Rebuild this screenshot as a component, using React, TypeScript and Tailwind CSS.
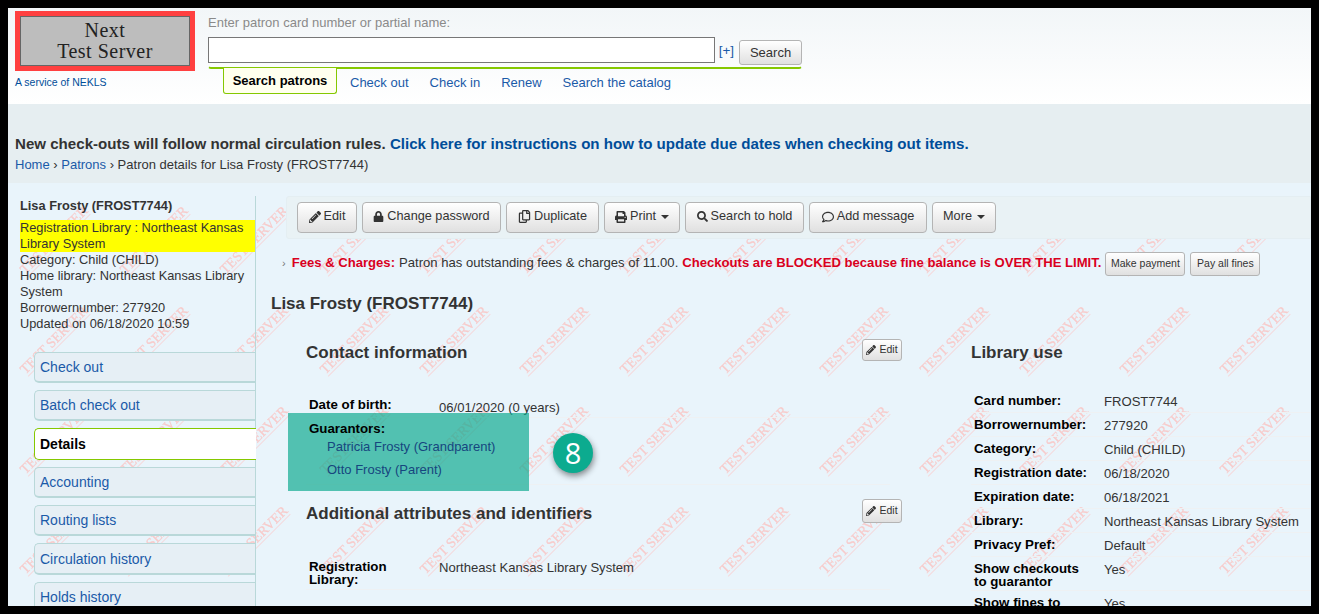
import React from "react";
import { FaPencilAlt, FaLock, FaRegCopy, FaPrint, FaSearch, FaRegComment } from "react-icons/fa";

const btn =
  "flex items-center justify-center gap-[3px] h-[31px] pb-[2px] border border-[#b4b4b4] rounded-[4px] bg-gradient-to-b from-white to-[#e0e0e0] text-[#333] text-[12.7px] whitespace-nowrap";
const smallBtn =
  "flex items-center justify-center gap-[3px] border border-[#b4b4b4] rounded-[3px] bg-gradient-to-b from-white to-[#e0e0e0] text-[#333] text-[10.5px] whitespace-nowrap";

function Caret() {
  return <span className="ml-[2px] inline-block w-0 h-0 border-x-[4px] border-x-transparent border-t-[4px] border-t-[#333]" />;
}

function Watermark() {
  return (
    <svg className="absolute inset-0 w-full h-full pointer-events-none" aria-hidden="true">
      <defs>
        <pattern id="wm" width="100" height="100" patternUnits="userSpaceOnUse">
          <g transform="translate(47 58) rotate(-45)">
            <text x="0" y="3" textAnchor="middle" fontFamily="'Liberation Serif', serif" fontSize="14" fill="#f7cbcb" stroke="#f7cbcb" strokeWidth="0.25">
              TEST SERVER
            </text>
            <line x1="-44" y1="6" x2="44" y2="6" stroke="#f4dadd" strokeWidth="1" />
          </g>
        </pattern>
      </defs>
      <rect width="100%" height="100%" fill="url(#wm)" />
    </svg>
  );
}

const tabs: [string, number][] = [
  ["Check out", 31],
  ["Batch check out", 31],
  ["Details", 32],
  ["Accounting", 31],
  ["Routing lists", 31],
  ["Circulation history", 32],
  ["Holds history", 31],
];

function Sidebar() {
  return (
    <div className="relative w-[248px] shrink-0 border-r border-[#b9d8d9] mt-[13px] pl-[12px] text-[12.8px] leading-[16px] text-[#333]">
      <div className="h-[24px] pt-[2px] font-bold text-[12.8px] leading-[16px]">Lisa Frosty (FROST7744)</div>
      <div className="bg-[#ffff00]">Registration Library : Northeast Kansas Library System</div>
      <div>Category: Child (CHILD)</div>
      <div>Home library: Northeast Kansas Library System</div>
      <div>Borrowernumber: 277920</div>
      <div>Updated on 06/18/2020 10:59</div>
      <div className="mt-[20px] ml-[14px] flex flex-col gap-[7px]">
        {tabs.map(([t, h]) =>
          t === "Details" ? (
            <div key={t} style={{ height: h }} className="shrink-0 flex items-center pl-[5px] -mr-px rounded-l-[5px] border border-r-0 border-[#85c800] bg-white font-bold text-black text-[14px]">
              {t}
            </div>
          ) : (
            <div key={t} style={{ height: h }} className="shrink-0 flex items-center pl-[5px] rounded-l-[5px] border border-r-0 border-b-2 border-[#b9d8d9] bg-[#e6eff5] text-[#1a5aa8] text-[14px]">
              {t}
            </div>
          )
        )}
      </div>
    </div>
  );
}

function Toolbar() {
  return (
    <div className="ml-[30px] mt-[13px] h-[43px] flex items-center gap-[5px] pl-[10px] bg-[#e9f2f5] border border-[#e4eef2] rounded-l-[3px]">
      <div className={btn + " w-[60px]"}><FaPencilAlt className="text-[12px]" />Edit</div>
      <div className={btn + " w-[139px]"}><FaLock className="text-[11px]" />Change password</div>
      <div className={btn + " w-[93px]"}><FaRegCopy className="text-[13px]" />Duplicate</div>
      <div className={btn + " w-[76px]"}><FaPrint className="text-[12px]" />Print<Caret /></div>
      <div className={btn + " w-[119px]"}><FaSearch className="text-[11px]" />Search to hold</div>
      <div className={btn + " w-[118px]"}><FaRegComment className="text-[12px]" />Add message</div>
      <div className={btn + " w-[64px]"}>More<Caret /></div>
    </div>
  );
}

function EditBtn({ h }: { h: number }) {
  return (
    <div style={{ height: h }} className={smallBtn + " w-[40px]"}>
      <FaPencilAlt className="text-[10px]" />Edit
    </div>
  );
}

function Row({ label, children, h, labelCls }: { label: React.ReactNode; children: React.ReactNode; h: number; labelCls?: string }) {
  return (
    <div style={{ height: h }} className="flex border-b border-[#eef1f3] pl-[3px]">
      <div className={"w-[130px] shrink-0 font-bold text-[13.3px] leading-[13px] text-black " + (labelCls ?? "pt-[5px]")}>{label}</div>
      <div className="pt-[5px] text-[13.1px] leading-[16px] text-[#333] whitespace-nowrap">{children}</div>
    </div>
  );
}

function ContactColumn() {
  return (
    <div className="w-[596px] shrink-0 ml-[35px]">
      <div className="h-[22px] flex justify-between items-start">
        <div className="pt-[4px] text-[17px] leading-[20px] font-bold text-[#333]">Contact information</div>
        <EditBtn h={22} />
      </div>
      <div className="w-[584px] mt-[29px]">
        <Row label="Date of birth:" h={28} labelCls="pt-[8px]">
          <span className="relative top-[5px]">06/01/2020 (0 years)</span>
        </Row>
        <div className="relative h-[67px] border-b border-[#eef1f3] pl-[3px] pt-[4px]">
          <div className="absolute left-[-18px] top-[-5px] w-[241px] h-[78px] bg-[#0aa88d]/[0.68]" />
          <div className="relative font-bold text-[13.3px] leading-[13px] text-black">Guarantors:</div>
          <div className="relative ml-[18px] text-[13px] leading-[23px] text-[#16467f]">
            <div>Patricia Frosty (Grandparent)</div>
            <div>Otto Frosty (Parent)</div>
          </div>
          <div className="absolute left-[247px] top-[15px] w-[40px] h-[40px] rounded-full bg-[#0cab8f] text-white text-[29px] leading-[40px] text-center font-['Open_Sans',sans-serif] shadow-[1px_3px_6px_rgba(0,0,0,0.45)]">
            8
          </div>
        </div>
      </div>
      <div className="mt-[14px] h-[24px] flex justify-between items-start">
        <div className="pt-[5px] text-[17px] leading-[20px] font-bold text-[#333]">Additional attributes and identifiers</div>
        <EditBtn h={24} />
      </div>
      <div className="w-[584px] mt-[29px]">
        <Row label={<>Registration<br />Library:</>} h={38} labelCls="pt-[8px]">
          <span className="relative top-[3px]">Northeast Kansas Library System</span>
        </Row>
      </div>
    </div>
  );
}

function LibraryColumn() {
  const rows: [string, string][] = [
    ["Card number:", "FROST7744"],
    ["Borrowernumber:", "277920"],
    ["Category:", "Child (CHILD)"],
    ["Registration date:", "06/18/2020"],
    ["Expiration date:", "06/18/2021"],
    ["Library:", "Northeast Kansas Library System"],
    ["Privacy Pref:", "Default"],
  ];
  return (
    <div className="ml-[69px] flex-1 min-w-0">
      <div className="h-[22px] pt-[4px] text-[17px] leading-[20px] font-bold text-[#333]">Library use</div>
      <div className="mt-[28px]">
        {rows.map(([l, v]) => (
          <Row key={l} label={l} h={24}>{v}</Row>
        ))}
        <Row label={<>Show checkouts<br />to guarantor</>} h={34}>Yes</Row>
        <Row label={<>Show fines to<br />guarantor</>} h={34}>Yes</Row>
      </div>
    </div>
  );
}

function Main() {
  return (
    <div className="relative flex-1 min-w-0">
      <Toolbar />
      <div className="mt-[13px] h-[24px] flex items-center pl-[26px] text-[13.1px] text-[#333] whitespace-nowrap">
        <span className="text-[#777] text-[11px] mr-[6px] mb-[2px]">›</span>
        <b className="text-[#d9001e] mb-[2px]">Fees &amp; Charges:</b>
        <span className="ml-[4px] mb-[2px]">Patron has outstanding fees &amp; charges of 11.00.</span>
        <b className="ml-[4px] mb-[2px] text-[#d9001e]">Checkouts are BLOCKED because fine balance is OVER THE LIMIT.</b>
        <div className={smallBtn + " ml-[4px] h-[24px] w-[80px]"}>Make payment</div>
        <div className={smallBtn + " ml-[5px] h-[24px] w-[70px]"}>Pay all fines</div>
      </div>
      <div className="mt-[16px] h-[24px] pl-[15px] text-[17px] leading-[24px] font-bold text-[#333]">Lisa Frosty (FROST7744)</div>
      <div className="mt-[23px] flex">
        <div className="w-[15px] shrink-0" />
        <ContactColumn />
        <LibraryColumn />
      </div>
    </div>
  );
}

export default function App() {
  return (
    <div className="w-[1319px] h-[614px] bg-black p-2 overflow-hidden font-['Liberation_Sans',sans-serif]">
      <div className="h-[598px] flex flex-col overflow-hidden">
        <header className="h-[96px] shrink-0 flex bg-gradient-to-b from-[#f2f6f8] to-white">
          <div className="w-[200px] shrink-0 pl-[7px] pt-[3px]">
            <div className="w-[180px] h-[60px] bg-[#ff4040] p-[5px]">
              <div className="h-full border border-[#666] bg-[#bdbdbd] flex flex-col items-center justify-center text-[#222] text-[20px] tracking-[0.5px] leading-[21px] font-['Liberation_Serif',serif]">
                <div>Next</div>
                <div>Test Server</div>
              </div>
            </div>
            <div className="mt-[5px] text-[10.5px] leading-[12px] text-[#004d99]">A service of NEKLS</div>
          </div>
          <div className="w-[594px] shrink-0 flex flex-col pt-[6px]">
            <div className="h-[23px] pt-[1px] text-[13px] leading-[16px] text-[#8a8a8a]">Enter patron card number or partial name:</div>
            <div className="h-[28px] flex">
              <div className="w-[507px] h-[26px] border border-[#777] bg-white" />
              <div className="ml-[4px] mt-[5px] text-[13.5px] leading-[18px] text-[#1a5aa8]">[+]</div>
              <div className="ml-[5px] mt-[3px] w-[63px] h-[25px] flex items-center justify-center border border-[#b4b4b4] rounded-[3px] bg-gradient-to-b from-white to-[#e0e0e0] text-[13px] text-[#333]">Search</div>
            </div>
            <div className="h-[4px] border-b-2 border-x border-x-transparent border-b-[#85c800] rounded-b-[3px]" />
            <div className="flex">
              <div className="ml-[15px] -mt-px w-[114px] h-[26px] flex items-center justify-center border border-t-0 border-[#85c800] rounded-b-[3px] bg-[#ffffee] font-bold text-[13px] text-black">Search patrons</div>
              <div className="ml-[13px] flex gap-[21px] pt-[5px] text-[13px] leading-[18px] text-[#1a5aa8] whitespace-nowrap">
                <span>Check out</span>
                <span>Check in</span>
                <span>Renew</span>
                <span>Search the catalog</span>
              </div>
            </div>
          </div>
        </header>
        <div className="h-[79px] shrink-0 bg-[#e6eef1] pl-[7px] pt-[30px]">
          <div className="h-[20px] text-[15.1px] leading-[20px] font-bold text-[#333] whitespace-nowrap">
            New check-outs will follow normal circulation rules. <span className="text-[#004d99]">Click here for instructions on how to update due dates when checking out items.</span>
          </div>
          <div className="mt-[1px] text-[13px] leading-[20px] text-[#333] whitespace-nowrap">
            <span className="text-[#1a5aa8]">Home</span> › <span className="text-[#1a5aa8]">Patrons</span> › Patron details for Lisa Frosty (FROST7744)
          </div>
        </div>
        <div className="relative flex-1 min-h-0 flex overflow-hidden bg-[#e9f4fb]">
          <Watermark />
          <Sidebar />
          <Main />
        </div>
      </div>
    </div>
  );
}
